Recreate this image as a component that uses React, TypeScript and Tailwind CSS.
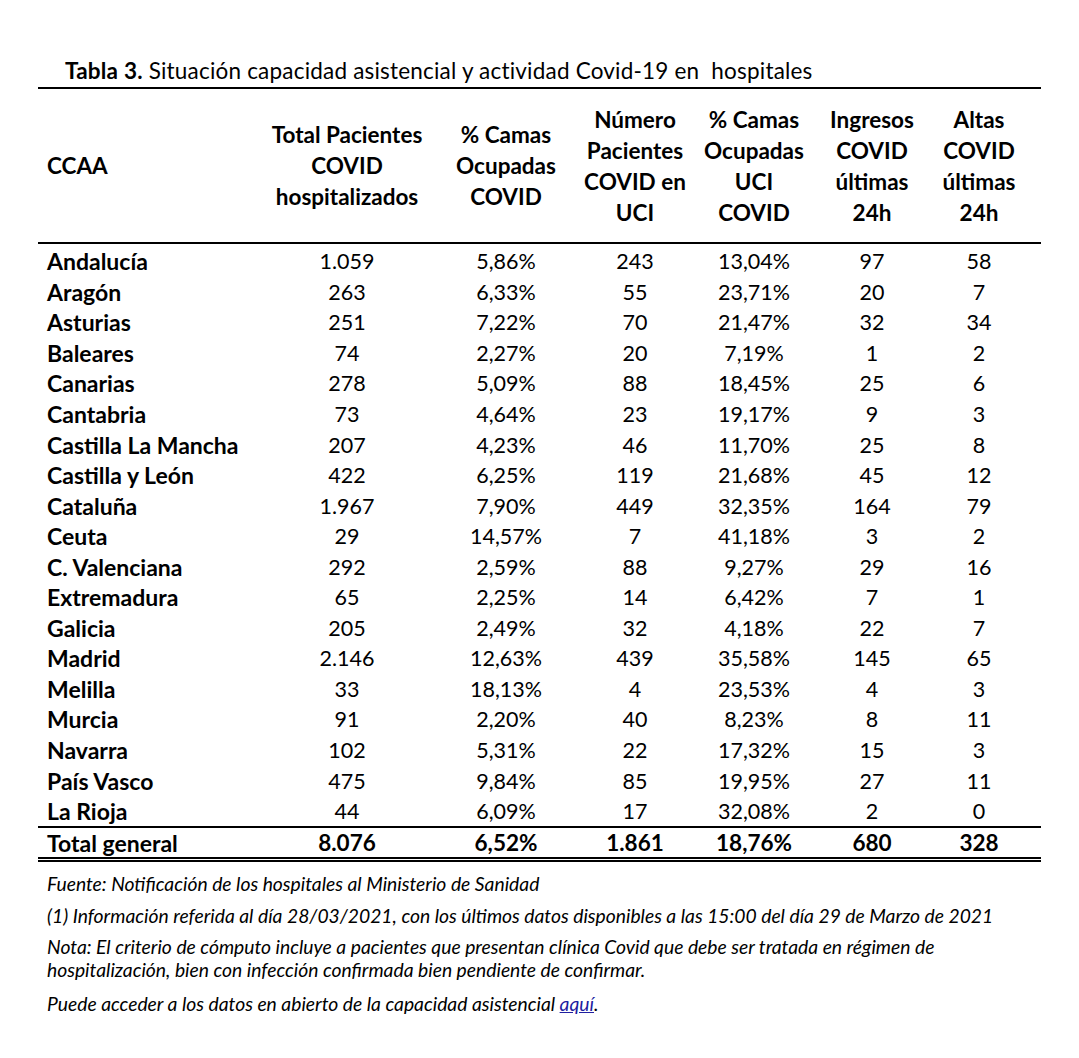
const rows: [string, string, string, string, string, string, string][] = [
  ["Andalucía", "1.059", "5,86%", "243", "13,04%", "97", "58"],
  ["Aragón", "263", "6,33%", "55", "23,71%", "20", "7"],
  ["Asturias", "251", "7,22%", "70", "21,47%", "32", "34"],
  ["Baleares", "74", "2,27%", "20", "7,19%", "1", "2"],
  ["Canarias", "278", "5,09%", "88", "18,45%", "25", "6"],
  ["Cantabria", "73", "4,64%", "23", "19,17%", "9", "3"],
  ["Castilla La Mancha", "207", "4,23%", "46", "11,70%", "25", "8"],
  ["Castilla y León", "422", "6,25%", "119", "21,68%", "45", "12"],
  ["Cataluña", "1.967", "7,90%", "449", "32,35%", "164", "79"],
  ["Ceuta", "29", "14,57%", "7", "41,18%", "3", "2"],
  ["C. Valenciana", "292", "2,59%", "88", "9,27%", "29", "16"],
  ["Extremadura", "65", "2,25%", "14", "6,42%", "7", "1"],
  ["Galicia", "205", "2,49%", "32", "4,18%", "22", "7"],
  ["Madrid", "2.146", "12,63%", "439", "35,58%", "145", "65"],
  ["Melilla", "33", "18,13%", "4", "23,53%", "4", "3"],
  ["Murcia", "91", "2,20%", "40", "8,23%", "8", "11"],
  ["Navarra", "102", "5,31%", "22", "17,32%", "15", "3"],
  ["País Vasco", "475", "9,84%", "85", "19,95%", "27", "11"],
  ["La Rioja", "44", "6,09%", "17", "32,08%", "2", "0"],
];

const headers = [
  ["Total Pacientes", "COVID", "hospitalizados"],
  ["% Camas", "Ocupadas", "COVID"],
  ["Número", "Pacientes", "COVID en", "UCI"],
  ["% Camas", "Ocupadas", "UCI", "COVID"],
  ["Ingresos", "COVID", "últimas", "24h"],
  ["Altas", "COVID", "últimas", "24h"],
];

const cols = "grid grid-cols-[224px_170px_148px_110px_128px_108px_106px]";

export default function App() {
  return (
    <div className="min-h-[1058px] w-[1079px] bg-white text-black font-['Lato','Open_Sans',sans-serif]">
      <div className="px-[38px] pt-[57px]">
        <h1 className="pl-[27px] text-[22.5px] leading-[27px] tracking-[0.2px]">
          <span className="font-bold">Tabla 3.</span> Situación capacidad asistencial y actividad Covid-19 en{"\u00a0 "}hospitales
        </h1>

        <div className="mt-[3px] border-t-2 border-black">
          <div className={`${cols} h-[155px] items-center border-b-2 border-black font-bold text-[22.5px] leading-[31px]`}>
            <div className="pl-[9px]">CCAA</div>
            {headers.map((h, i) => (
              <div key={i} className="flex flex-col items-center text-center">
                {h.map((l, j) => (
                  <span key={j}>{l}</span>
                ))}
              </div>
            ))}
          </div>

          <div className="pt-[2px]">
            {rows.map((r) => (
              <div key={r[0]} className={`${cols} h-[30.55px] items-center text-[21.5px] leading-[28px]`}>
                <div className="pl-[9px] font-bold text-[23px]">{r[0]}</div>
                {r.slice(1).map((v, i) => (
                  <div key={i} className="text-center">{v}</div>
                ))}
              </div>
            ))}
          </div>

          <div className={`${cols} h-[36px] items-center border-t-2 border-b-[5px] border-double border-t-black border-b-black font-bold text-[22.5px] leading-[28px]`}>
            <div className="pl-[9px] text-[23px]">Total general</div>
            {["8.076", "6,52%", "1.861", "18,76%", "680", "328"].map((v, i) => (
              <div key={i} className="text-center">{v}</div>
            ))}
          </div>
        </div>

        <div className="pl-[9px] pt-[10px] italic text-[19.3px] leading-[23px]">
          <p>Fuente: Notificación de los hospitales al Ministerio de Sanidad</p>
          <p className="mt-[9px]">(1) Información referida al día 28/03/2021, con los últimos datos disponibles a las 15:00 del día 29 de Marzo de 2021</p>
          <p className="mt-[8px] max-w-[935px]">Nota: El criterio de cómputo incluye a pacientes que presentan clínica Covid que debe ser tratada en régimen de hospitalización, bien con infección confirmada bien pendiente de confirmar.</p>
          <p className="mt-[11px]">
            Puede acceder a los datos en abierto de la capacidad asistencial{" "}
            <span className="text-[#2020a0] underline">aquí</span>.
          </p>
        </div>
      </div>
    </div>
  );
}
